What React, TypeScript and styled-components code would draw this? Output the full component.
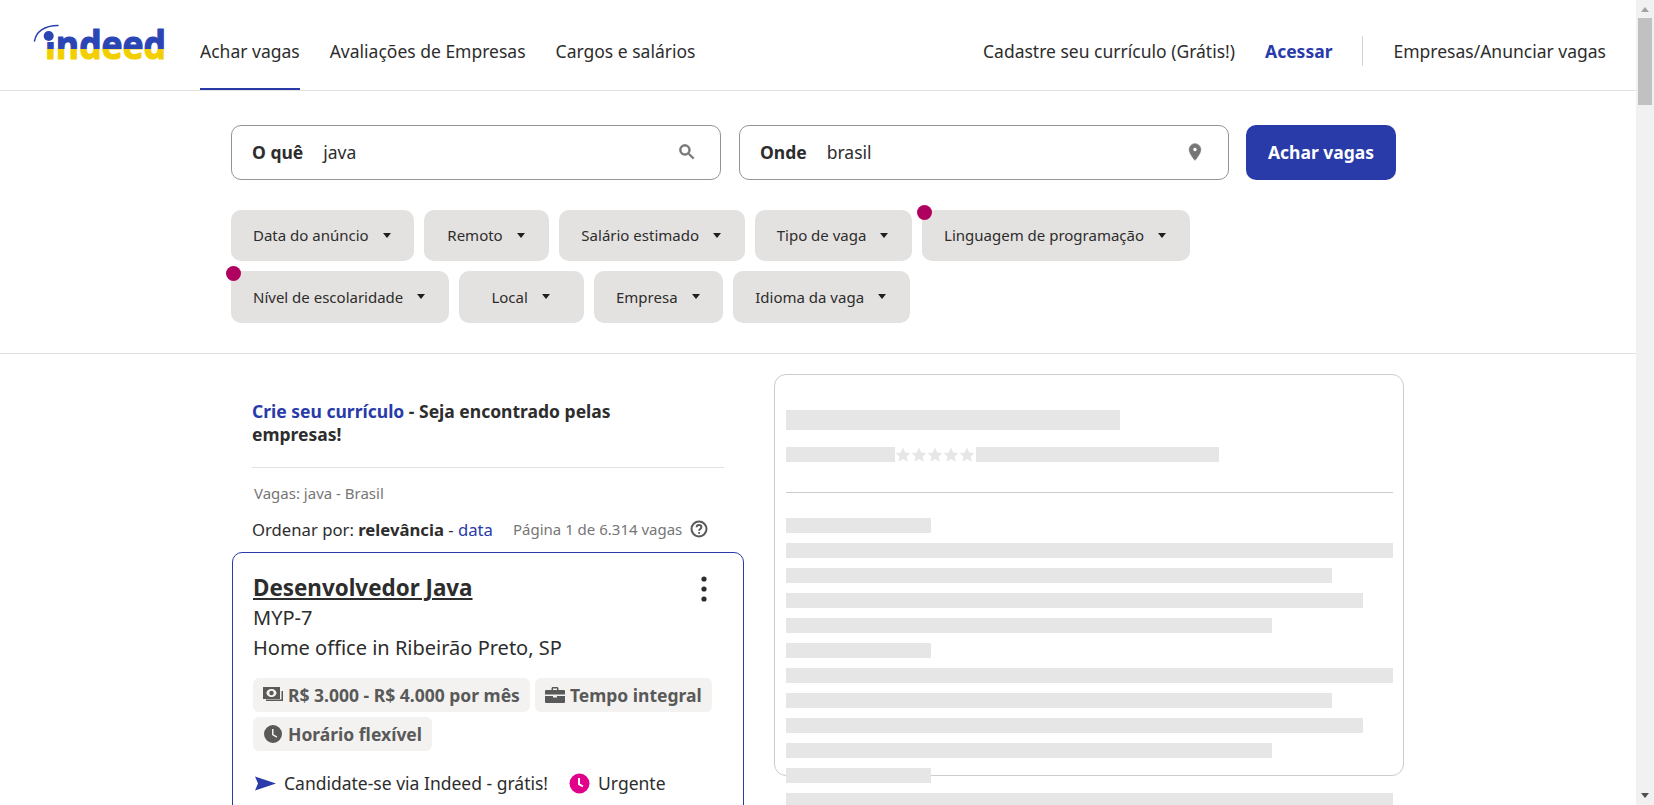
import styled, { createGlobalStyle } from 'styled-components'

const BLUE = '#293ba9'
const INK = '#2d2d2d'

const GlobalStyle = createGlobalStyle`
  html, body { margin: 0; padding: 0; background: #fff; }
  body {
    font-family: "Noto Sans", "Open Sans", sans-serif;
    font-size: 17.5px;
    color: ${INK};
  }
  * { box-sizing: border-box; }
`

const FILTER_ROWS = [
  {
    height: 51,
    items: [
      { label: 'Data do anúncio' },
      { label: 'Remoto' },
      { label: 'Salário estimado' },
      { label: 'Tipo de vaga' },
      { label: 'Linguagem de programação', dot: true },
    ],
  },
  {
    height: 52,
    items: [
      { label: 'Nível de escolaridade', dot: true },
      { label: 'Local' },
      { label: 'Empresa' },
      { label: 'Idioma da vaga' },
    ],
  },
]

const BODY_BARS = [145, 607, 546, 577, 486, 145, 607, 546, 577, 486, 145, 607]

const Shell = styled.div`
  display: flex;
  height: 100vh;
  overflow: hidden;
`

const Page = styled.div`
  flex: 1;
  min-width: 0;
  overflow: hidden;
`

const Scrollbar = styled.div`
  flex: none;
  display: flex;
  flex-direction: column;
  align-items: center;
  width: 18px;
  background: #f1f1f1;
`

const ScrollUp = styled.span`
  margin-top: 7px;
  border-left: 4.5px solid transparent;
  border-right: 4.5px solid transparent;
  border-bottom: 5px solid #a3a3a3;
`

const ScrollThumb = styled.span`
  width: 14px;
  height: 87px;
  margin-top: 6px;
  background: #c1c1c1;
`

const ScrollDown = styled.span`
  margin-top: auto;
  margin-bottom: 7px;
  border-left: 4.5px solid transparent;
  border-right: 4.5px solid transparent;
  border-top: 5px solid #505050;
`

const Header = styled.header`
  display: flex;
  align-items: stretch;
  height: 91px;
  padding: 0 30px 0 34px;
  border-bottom: 1px solid #e4e2e0;
`

const LogoSvg = styled.svg`
  flex: none;
  width: 134px;
  height: 40px;
  margin-top: 23px;
  overflow: visible;
`

const Nav = styled.nav`
  display: flex;
  gap: 30px;
  margin-left: 32px;
`

const NavItem = styled.a<{ $active?: boolean }>`
  display: flex;
  align-items: center;
  height: 90px;
  padding-top: 14px;
  border-bottom: 2px solid ${({ $active }) => ($active ? BLUE : 'transparent')};
`

const NavRight = styled.div`
  display: flex;
  align-items: center;
  margin-left: auto;
  padding-top: 12px;
`

const SignIn = styled.a`
  margin-left: 30px;
  font-weight: 700;
  color: ${BLUE};
`

const NavDivider = styled.span`
  width: 1px;
  height: 30px;
  margin: 0 30px;
  background: #d4d2d0;
`

const SearchArea = styled.section`
  padding: 34px 0 30px 231px;
  border-bottom: 1px solid #e4e2e0;
`

const SearchRow = styled.div`
  display: flex;
  gap: 18px;
`

const SearchBox = styled.div`
  display: flex;
  align-items: center;
  width: 490px;
  height: 55px;
  padding: 0 23px 2px 20px;
  border: 1px solid #949494;
  border-radius: 10px;
`

const SearchLabel = styled.span`
  margin-right: 20px;
  font-weight: 700;
`

const SearchValue = styled.span`
  flex: 1;
`

const FieldIcon = styled.svg`
  flex: none;
  width: 20px;
  height: 20px;
  fill: #767676;
  stroke: #767676;
  stroke-width: 0.8;
`

const SearchButton = styled.button`
  width: 150px;
  height: 55px;
  margin-left: -1px;
  padding: 0 0 2px;
  border: none;
  border-radius: 10px;
  background: ${BLUE};
  color: #fff;
  font: 700 17.5px "Noto Sans", sans-serif;
`

const Filters = styled.div`
  display: flex;
  flex-direction: column;
  gap: 10px;
  margin-top: 30px;
`

const FilterRow = styled.div<{ $h: number }>`
  display: flex;
  gap: 10px;
  height: ${({ $h }) => $h}px;
`

const Pill = styled.div<{ $dot?: boolean }>`
  position: relative;
  display: flex;
  align-items: center;
  justify-content: center;
  gap: 14px;
  min-width: 125px;
  padding: 0 23.7px 1px 22px;
  border-radius: 10px;
  background: #e4e2e0;
  font-size: 15px;

  &::before {
    content: '';
    display: ${({ $dot }) => ($dot ? 'block' : 'none')};
    position: absolute;
    left: -5px;
    top: -5px;
    width: 15px;
    height: 15px;
    border-radius: 50%;
    background: #b0005f;
  }
`

const Caret = styled.span`
  width: 0;
  height: 0;
  border-left: 4.5px solid transparent;
  border-right: 4.5px solid transparent;
  border-top: 5px solid #1f1f1f;
`

const Main = styled.main`
  display: flex;
  gap: 30px;
  padding-left: 232px;
`

const Results = styled.div`
  width: 512px;
`

const Promo = styled.p`
  margin: 46px 20px 0;
  padding: 0 80px 21px 0;
  border-bottom: 1px solid #e4e2e0;
  font-size: 17.5px;
  font-weight: 700;
  line-height: 23px;
`

const PromoLink = styled.a`
  color: ${BLUE};
`

const Query = styled.div`
  margin: 15px 22px 0;
  font-size: 15px;
  line-height: 20px;
  color: #767676;
`

const SortRow = styled.div`
  display: flex;
  align-items: center;
  margin: 14px 20px 0;
  height: 24px;
  font-size: 16.7px;
`

const SortLink = styled.a`
  color: ${BLUE};
`

const PageCount = styled.span`
  display: flex;
  align-items: center;
  gap: 8px;
  margin-left: 20px;
  font-size: 15px;
  color: #767676;
`

const HelpIcon = styled.svg`
  width: 18px;
  height: 18px;
`

const Card = styled.article`
  position: relative;
  margin-top: 11px;
  height: 420px;
  padding: 19px 20px;
  border: 1px solid ${BLUE};
  border-radius: 10px;
`

const CardTitle = styled.h2`
  margin: 0;
  font-size: 22.4px;
  line-height: 31px;
  font-weight: 700;
  text-decoration: underline;
`

const CardLine = styled.div`
  font-size: 20px;
  line-height: 30px;
`

const Kebab = styled.svg`
  position: absolute;
  right: 36px;
  top: 23px;
  width: 6px;
  height: 26px;
  fill: #2d2d2d;
`

const Tags = styled.div`
  display: flex;
  flex-wrap: wrap;
  gap: 5px;
  margin-top: 15px;
`

const Tag = styled.span`
  display: flex;
  align-items: center;
  gap: 5px;
  height: 34px;
  padding: 0 10px;
  border-radius: 6px;
  background: #f3f2f1;
  font-weight: 700;
  color: #595959;
`

const TagIcon = styled.svg`
  width: 20px;
  height: 20px;
  fill: #595959;
`

const Perks = styled.div`
  display: flex;
  align-items: center;
  gap: 21px;
  margin: 20px 0 0 2px;
  height: 24px;
`

const Perk = styled.span`
  display: flex;
  align-items: center;
  gap: 8px;
`

const PerkIcon = styled.svg`
  width: 21px;
  height: 21px;
`

const Panel = styled.aside`
  width: 630px;
  height: 402px;
  margin-top: 20px;
  padding: 35px 0 0 11px;
  border: 1px solid #ccc;
  border-radius: 12px;
`

const Bar = styled.div<{ $w: number; $h?: number }>`
  width: ${({ $w }) => $w}px;
  height: ${({ $h }) => $h ?? 15}px;
  background: #e6e6e6;
`

const RatingRow = styled.div`
  display: flex;
  align-items: center;
  height: 15px;
  margin-top: 17px;
`

const Stars = styled.svg`
  flex: none;
  width: 81px;
  height: 15px;
  fill: #e6e6e6;
`

const PanelRule = styled.div`
  width: 607px;
  height: 1px;
  margin: 30px 0 25px;
  background: #ccc;
`

const BarStack = styled.div`
  display: flex;
  flex-direction: column;
  gap: 10px;
`

const STAR = 'M8 .6l2.2 4.9 5.3.5-4 3.6 1.2 5.2L8 12.1l-4.7 2.7 1.2-5.2-4-3.6 5.3-.5z'

const Logo = () => (
  <LogoSvg viewBox="0 0 134 40">
    <defs>
      <linearGradient id="flag" gradientUnits="userSpaceOnUse" x1="0" y1="0" x2="0" y2="40">
        <stop offset="0.65" stopColor="#2b45b5" />
        <stop offset="0.65" stopColor="#f2cf00" />
      </linearGradient>
    </defs>
    <text
      x="11"
      y="36"
      textLength="121"
      lengthAdjust="spacingAndGlyphs"
      fontFamily="'Open Sans', 'Noto Sans', sans-serif"
      fontWeight="700"
      fontSize="39"
      fill="url(#flag)"
      stroke="url(#flag)"
      strokeWidth="1.2"
      strokeLinejoin="round"
    >
      indeed
    </text>
    {/* hides the stock i dot so the logo's round dot and arc can sit there */}
    <rect x="9" y="3" width="12" height="16" fill="#fff" />
    <path d="M0.5 18C2 9 10 2.500 24 2.500" fill="none" stroke="#2b3fae" strokeWidth="1.5" strokeLinecap="round" />
    <circle cx="14.700" cy="13" r="5" fill="#2b45b5" />
  </LogoSvg>
)

export default function App() {
  return (
    <Shell>
      <GlobalStyle />
      <Page>
        <Header>
          <Logo />
          <Nav>
            <NavItem $active>Achar vagas</NavItem>
            <NavItem>Avaliações de Empresas</NavItem>
            <NavItem>Cargos e salários</NavItem>
          </Nav>
          <NavRight>
            <span>Cadastre seu currículo (Grátis!)</span>
            <SignIn>Acessar</SignIn>
            <NavDivider />
            <span>Empresas/Anunciar vagas</span>
          </NavRight>
        </Header>

        <SearchArea>
          <SearchRow>
            <SearchBox>
              <SearchLabel>O quê</SearchLabel>
              <SearchValue>java</SearchValue>
              <FieldIcon viewBox="0 0 24 24">
                <path d="M15.5 14h-.79l-.28-.27C15.41 12.590 16 11.110 16 9.500 16 5.910 13.090 3 9.500 3S3 5.910 3 9.500 5.910 16 9.500 16c1.610 0 3.090-.59 4.230-1.570l.27.28v.79l5 4.990L20.490 19l-4.990-5zm-6 0C7.010 14 5 11.990 5 9.500S7.010 5 9.500 5 14 7.010 14 9.500 11.990 14 9.500 14z" />
              </FieldIcon>
            </SearchBox>
            <SearchBox>
              <SearchLabel>Onde</SearchLabel>
              <SearchValue>brasil</SearchValue>
              <FieldIcon viewBox="0 0 24 24">
                <path d="M12 2a7 7 0 0 0-7 7c0 5.200 7 13 7 13s7-7.800 7-13a7 7 0 0 0-7-7zm0 9.500a2.500 2.500 0 1 1 0-5 2.500 2.500 0 0 1 0 5z" />
              </FieldIcon>
            </SearchBox>
            <SearchButton>Achar vagas</SearchButton>
          </SearchRow>
          <Filters>
            {FILTER_ROWS.map((row) => (
              <FilterRow key={row.height} $h={row.height}>
                {row.items.map((f) => (
                  <Pill key={f.label} $dot={f.dot}>
                    {f.label}
                    <Caret />
                  </Pill>
                ))}
              </FilterRow>
            ))}
          </Filters>
        </SearchArea>

        <Main>
          <Results>
            <Promo>
              <PromoLink>Crie seu currículo</PromoLink> - Seja encontrado pelas empresas!
            </Promo>
            <Query>Vagas: java - Brasil</Query>
            <SortRow>
              <span>
                Ordenar por: <b>relevância</b> - <SortLink>data</SortLink>
              </span>
              <PageCount>
                Página 1 de 6.314 vagas
                <HelpIcon viewBox="0 0 18 18">
                  <circle cx="9" cy="9" r="7.500" fill="none" stroke="#595959" strokeWidth="2" />
                  <path d="M6.600 7.200C6.700 5.800 7.700 5 9 5c1.400 0 2.400.9 2.400 2.100 0 1.900-2.300 1.900-2.300 3.700" fill="none" stroke="#595959" strokeWidth="2" />
                  <circle cx="9.100" cy="13" r="1.100" fill="#595959" />
                </HelpIcon>
              </PageCount>
            </SortRow>
            <Card>
              <CardTitle>Desenvolvedor Java</CardTitle>
              <Kebab viewBox="0 0 6 26">
                <circle cx="3" cy="3" r="2.600" />
                <circle cx="3" cy="13" r="2.600" />
                <circle cx="3" cy="23" r="2.600" />
              </Kebab>
              <CardLine>MYP-7</CardLine>
              <CardLine>Home office in Ribeirão Preto, SP</CardLine>
              <Tags>
                <Tag>
                  <TagIcon viewBox="0 0 20 20">
                    <path fillRule="evenodd" d="M0 2h17v12H0zm8.500 2C5.700 4 3.500 5.800 3.500 8s2.200 4 5 4 5-1.800 5-4-2.200-4-5-4zm0 1.800a2.200 2.200 0 1 1 0 4.400 2.200 2.200 0 0 1 0-4.400zM18.500 6H20v10H3v-1.500h15.500z" />
                  </TagIcon>
                  R$ 3.000 - R$ 4.000 por mês
                </Tag>
                <Tag>
                  <TagIcon viewBox="0 0 20 20">
                    <path d="M6.500 5V3.500C6.500 2.700 7.200 2 8 2h4c.8 0 1.500.7 1.500 1.500V5H19a1 1 0 0 1 1 1v3.500H0V6a1 1 0 0 1 1-1zM8 5h4V3.500H8zM0 11h8v1.500h4V11h8v6a1 1 0 0 1-1 1H1a1 1 0 0 1-1-1z" />
                  </TagIcon>
                  Tempo integral
                </Tag>
                <Tag>
                  <TagIcon viewBox="0 0 20 20">
                    <path fillRule="evenodd" d="M10 1a9 9 0 1 1 0 18 9 9 0 0 1 0-18zM9 5v6l4.500 2.700.8-1.300-3.800-2.200V5z" />
                  </TagIcon>
                  Horário flexível
                </Tag>
              </Tags>
              <Perks>
                <Perk>
                  <PerkIcon viewBox="0 0 21 21">
                    <path d="M0 3.500l21 7-21 7 3-7z" fill={BLUE} />
                  </PerkIcon>
                  Candidate-se via Indeed - grátis!
                </Perk>
                <Perk>
                  <PerkIcon viewBox="0 0 21 21">
                    <circle cx="10.500" cy="10.500" r="10" fill="#e0008a" />
                    <path d="M10 5v6.200l4 2.300" fill="none" stroke="#fff" strokeWidth="2" />
                  </PerkIcon>
                  Urgente
                </Perk>
              </Perks>
            </Card>
          </Results>

          <Panel>
            <Bar $w={334} $h={20} />
            <RatingRow>
              <Bar $w={109} />
              <Stars viewBox="0 0 81 15">
                {[0, 16, 32, 48, 64].map((x) => (
                  <path key={x} d={STAR} transform={`translate(${x} 0)`} />
                ))}
              </Stars>
              <Bar $w={243} />
            </RatingRow>
            <PanelRule />
            <BarStack>
              {BODY_BARS.map((w, i) => (
                <Bar key={i} $w={w} />
              ))}
            </BarStack>
          </Panel>
        </Main>
      </Page>
      <Scrollbar>
        <ScrollUp />
        <ScrollThumb />
        <ScrollDown />
      </Scrollbar>
    </Shell>
  )
}
